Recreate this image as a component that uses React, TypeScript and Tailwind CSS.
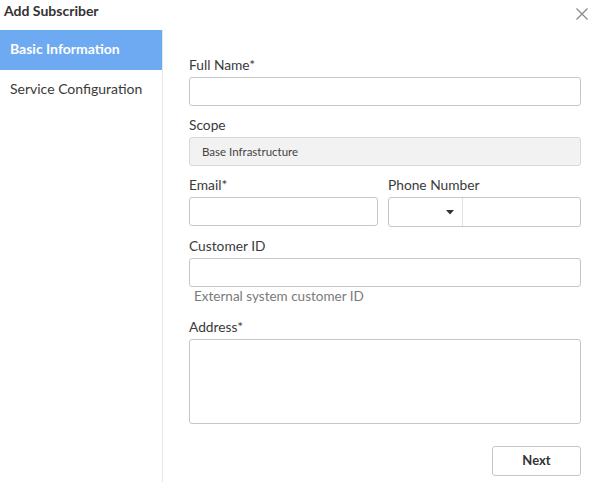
import React from "react";

const font = { fontFamily: "Lato, 'Open Sans', Arial, sans-serif" };

const Label = ({ children }: { children: React.ReactNode }) => (
  <div className="text-[13.75px] leading-4 text-[#3a3a3a] mb-[4px]">{children}</div>
);

const TextInput = () => (
  <input
    type="text"
    className="block w-full min-w-0 h-[29px] rounded-[3px] border border-[#c6c6c6] bg-white px-2 text-[13px] outline-none"
  />
);

export default function App() {
  return (
    <div className="w-[597px] h-[482px] bg-white flex flex-col overflow-hidden" style={font}>
      {/* Header */}
      <div className="h-[30px] flex items-start justify-between">
        <h1 className="pl-[4px] pt-0 text-[14px] font-bold text-[#333]">Add Subscriber</h1>
        <button className="mr-[8px] mt-[7px] text-[#8a8a8a]" aria-label="Close">
          <svg width="14" height="14" viewBox="0 0 14 14" fill="none" stroke="currentColor" strokeWidth="1.3">
            <path d="M1.5 1.5 L12.5 12.5 M12.5 1.5 L1.5 12.5" />
          </svg>
        </button>
      </div>

      <div className="flex flex-1 min-h-0">
        {/* Sidebar */}
        <nav className="w-[163px] shrink-0 border-r border-[#e6e6e6] flex flex-col">
          <div className="h-[40px] flex items-center pl-[10px] pb-[3px] bg-[#6eaaf2] text-white text-[14px] font-bold">
            Basic Information
          </div>
          <div className="h-[40px] flex items-center pl-[10px] pb-[3px] text-[14px] text-[#3a3a3a]">
            Service Configuration
          </div>
        </nav>

        {/* Form */}
        <div className="flex-1 min-w-0 pl-[26px] pr-[16px] pt-[27px] flex flex-col">
          <Label>Full Name*</Label>
          <TextInput />

          <div className="mt-[11px]">
            <Label>Scope</Label>
            <div className="h-[29px] rounded-[3px] border border-[#d3dada] bg-[#f2f2f2] flex items-center pl-[12px] text-[11.5px] text-[#444]">
              Base Infrastructure
            </div>
          </div>

          <div className="mt-[11px] flex gap-[10px]">
            <div className="w-[189px] shrink-0">
              <Label>Email*</Label>
              <TextInput />
            </div>
            <div className="flex-1 min-w-0">
              <Label>Phone Number</Label>
              <div className="h-[30px] rounded-[3px] border border-[#c6c6c6] flex">
                <div className="w-[74px] border-r border-[#e3e3e3] flex items-center justify-end pr-[8px]">
                  <svg width="8" height="5" viewBox="0 0 8 5">
                    <path d="M0 0 L8 0 L4 4.5 Z" fill="#333" />
                  </svg>
                </div>
                <input type="text" className="flex-1 min-w-0 px-2 outline-none text-[13px]" />
              </div>
            </div>
          </div>

          <div className="mt-[11px]">
            <Label>Customer ID</Label>
            <TextInput />
            <div className="pl-[5px] mt-[1px] text-[13.5px] leading-4 text-[#7a7a7a]">External system customer ID</div>
          </div>

          <div className="mt-[15px]">
            <Label>Address*</Label>
            <textarea className="block w-full h-[85px] resize-none rounded-[3px] border border-[#c6c6c6] outline-none p-2 text-[13px]" />
          </div>

          <div className="mt-[22px] flex justify-end">
            <button className="w-[89px] h-[30px] rounded-[3px] border border-[#c6c6c6] bg-white text-[13px] font-bold text-[#333]">
              Next
            </button>
          </div>
        </div>
      </div>
    </div>
  );
}
